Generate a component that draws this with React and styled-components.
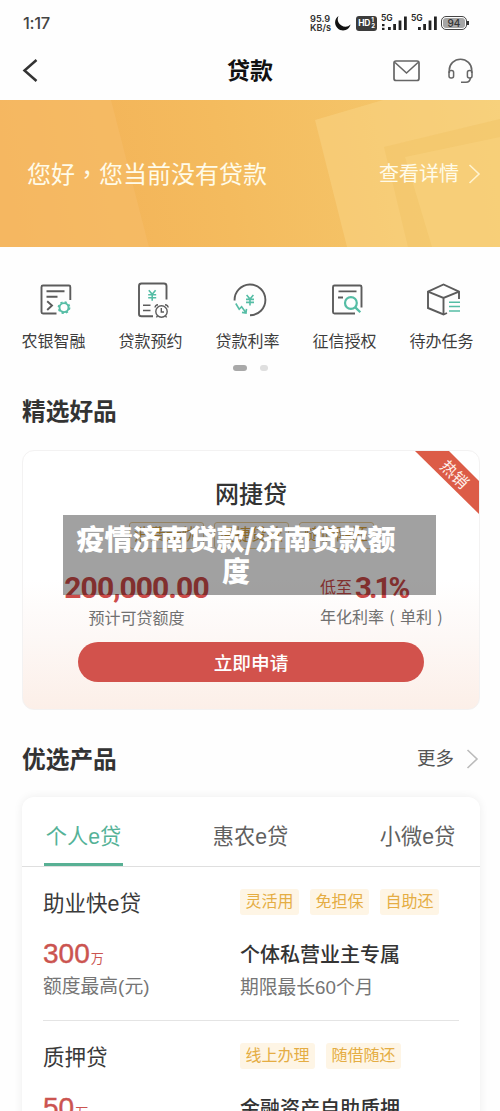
import styled, { createGlobalStyle } from 'styled-components';

const DARK = '#5c5c5c';
const TEAL = '#55bda5';

const tabs = ['个人e贷', '惠农e贷', '小微e贷'];

const products = [
	{
		name: '助业快e贷',
		amount: '300',
		tags: ['灵活用', '免担保', '自助还'],
		title: '个体私营业主专属',
		term: '期限最长60个月',
	},
	{
		name: '质押贷',
		amount: '50',
		tags: ['线上办理', '随借随还'],
		title: '金融资产自助质押',
	},
];

const Yen = ({ x, y }) => (
	<path
		transform={`translate(${x} ${y})`}
		d='M-3.4 -5 L0 -1 L3.4 -5 M0 -1 V5.5 M-4 -0.6 H4 M-4 2.4 H4'
		stroke={TEAL}
		strokeWidth='1.6'
	/>
);

const SmartIcon = () => (
	<QuickSvg viewBox='0 0 41 40'>
		<path d='M37.3 20 V7 Q37.3 5.5 36 5.5 H10 Q8.5 5.5 8.5 7 V32 Q8.5 33.5 10 33.5 H23.5' />
		<path d='M13.5 11.3 H31.5 M13.5 16.7 H24.5 M14.2 21.2 L19 25.5 L14.2 30' />
		<circle cx='31' cy='27.6' r='4.5' stroke={TEAL} />
		<circle
			cx='31'
			cy='27.6'
			r='5.6'
			stroke={TEAL}
			strokeWidth='1.6'
			strokeDasharray='2.2 2.2'
		/>
	</QuickSvg>
);

const BookingIcon = () => (
	<QuickSvg viewBox='0 0 41 40'>
		<path d='M36.5 19.5 V6 Q36.5 3.5 34 3.5 H11.5 Q9 3.5 9 6 V34 Q9 36.3 11.5 36.3 H23' />
		<path d='M13 25.3 H20.5 M13 30.5 H20.5' strokeWidth='1.4' />
		<Yen x={22.2} y={15.3} />
		<circle cx='31.5' cy='31.5' r='5.7' strokeWidth='1.4' />
		<path
			d='M31.3 28 V32 H34 M25 27.5 Q25.4 25 28 24.8 M35 24.8 Q37.8 25 38.2 27.5 M27.5 36 L26.4 37.4 M35.5 36 L36.6 37.4'
			strokeWidth='1.4'
		/>
	</QuickSvg>
);

const RateIcon = () => (
	<QuickSvg viewBox='0 0 41 40'>
		<path d='M7.6 20.5 A15.4 15.4 0 1 1 23 35.3' />
		<Yen x={23} y={20} />
		<path
			d='M8.8 23.5 L12.2 29.2 L14.6 26.8 L18.8 32.5 M19.5 28.8 L19 33 L15 32.4'
			stroke={TEAL}
			strokeWidth='1.6'
		/>
	</QuickSvg>
);

const CreditIcon = () => (
	<QuickSvg viewBox='0 0 41 40'>
		<path d='M37.5 27.5 V7 Q37.5 5.5 36 5.5 H10.5 Q9 5.5 9 7 V32 Q9 33.5 10.5 33.5 H31' />
		<path d='M14.5 11.4 H32.5 M14 17.5 H19' />
		<circle cx='26.9' cy='23' r='5.9' stroke={TEAL} strokeWidth='2.2' />
		<path d='M31.3 27.4 L36.3 32.3' stroke={TEAL} strokeWidth='2.3' />
	</QuickSvg>
);

const TaskIcon = () => (
	<QuickSvg viewBox='0 0 41 40'>
		<path d='M38 19 V11.6 L22.5 4.5 L7 11.6 V28 L22.5 34.5 L26 33' />
		<path d='M7 11.6 L22.5 18 L38 11.6 M22.5 18 V34' />
		<path d='M28 22.2 H39 M28 26.6 H39 M28 31 H39' stroke={TEAL} strokeWidth='1.5' />
	</QuickSvg>
);

const quickLinks = [
	{ label: '农银智融', Icon: SmartIcon },
	{ label: '贷款预约', Icon: BookingIcon },
	{ label: '贷款利率', Icon: RateIcon },
	{ label: '征信授权', Icon: CreditIcon },
	{ label: '待办任务', Icon: TaskIcon },
];

const Signal = ({ dots }) => (
	<SignalBox>
		<small>5G</small>
		<svg width='27' height='16' viewBox='0 0 27 16' fill='#222'>
			{dots && <rect x='1' y='8' width='2.5' height='2.2' />}
			{dots && <rect x='1' y='11.8' width='2.5' height='2.2' />}
			<rect x='7' y='11' width='2.8' height='3' />
			<rect x='12.2' y='8' width='2.8' height='6' />
			<rect x='17.6' y='4.5' width='2.8' height='9.5' />
			<rect x='23' y='0.5' width='2.8' height='13.5' />
		</svg>
	</SignalBox>
);

const StatusBar = () => (
	<StyledStatus>
		<Clock>1:17</Clock>
		<Speed>
			<span>95.9</span>
			<span>KB/s</span>
		</Speed>
		<Moon width='18' height='16' viewBox='0 0 18 16'>
			<path d='M4.5 1 A7.9 7.9 0 1 0 16.6 9.6 A7.6 7.6 0 0 1 4.5 1 Z' fill='#111' />
		</Moon>
		<HdBadge>
			HD
			<span>
				<i>1</i>
				<i>2</i>
			</span>
		</HdBadge>
		<Signal dots />
		<Signal />
		<Battery>
			<b>94</b>
		</Battery>
	</StyledStatus>
);

const Chevron = ({ color }) => (
	<svg width='13' height='20' viewBox='0 0 13 20' fill='none'>
		<path d='M1.5 1 L11 10 L1.5 19' stroke={color} strokeWidth='1.6' />
	</svg>
);

const App = () => {
	return (
		<>
			<GlobalStyle />
			<Page>
				<StatusBar />

				<NavBar>
					<svg width='20' height='26' viewBox='0 0 20 26' fill='none'>
						<path d='M14.5 2 L2.5 12.5 L14.5 23' stroke='#333' strokeWidth='2.5' />
					</svg>
					<h1>贷款</h1>
					<NavActions>
						<svg width='27' height='24' viewBox='0 0 27 24' fill='none' stroke='#666'>
							<rect x='1' y='2' width='25' height='19.5' rx='2' strokeWidth='1.7' />
							<path d='M2 3.5 L13.5 14 L25 3.5' strokeWidth='1.6' />
						</svg>
						<svg width='27' height='26' viewBox='0 0 27 26' fill='none' stroke='#666'>
							<path d='M2.3 15 V12 A11 10.6 0 0 1 24.7 12 V15' strokeWidth='1.6' />
							<rect x='2' y='12.5' width='4.6' height='7.6' rx='2' strokeWidth='1.5' />
							<rect x='20.4' y='12.5' width='4.6' height='7.6' rx='2' strokeWidth='1.5' />
							<path d='M23.5 19.5 Q23 24.3 19 24.3 H14' strokeWidth='1.6' />
						</svg>
					</NavActions>
				</NavBar>

				<Banner>
					<BannerArt viewBox='0 0 500 147' preserveAspectRatio='none'>
						<path d='M0 0 H111 L149 147 H0 Z' fill='#f6bd6c' opacity='.55' />
						<path d='M315 20 L383 0 H500 V147 H347 Z' fill='#fbd98c' opacity='.42' />
						<path d='M384 47 L500 19 V147 H408 Z' fill='#f2c366' opacity='.5' />
						<path d='M405 57 L500 37 V147 H432 Z' fill='#fad582' opacity='.45' />
					</BannerArt>
					<Greeting>
						您好<Tc>，</Tc>您当前没有贷款
					</Greeting>
					<Detail>
						查看详情
						<Chevron color='#fff3cf' />
					</Detail>
				</Banner>

				<QuickGrid>
					{quickLinks.map(({ label, Icon }) => (
						<QuickItem key={label}>
							<Icon />
							<span>{label}</span>
						</QuickItem>
					))}
				</QuickGrid>
				<Dots>
					<Dot $active />
					<Dot />
				</Dots>

				<SectionHead $top={22}>
					<h2>精选好品</h2>
				</SectionHead>
				<Featured>
					<Ribbon>
						<span>热销</span>
					</Ribbon>
					<h3>网捷贷</h3>
					<FeatureTags>
						<span>消费无忧</span>
						<span>便捷贷款</span>
						<span>随借随还</span>
					</FeatureTags>
					<Figures>
						<Figure>
							<strong>200,000.00</strong>
							<p>预计可贷额度</p>
						</Figure>
						<Rate>
							<div>
								<span>低至</span>
								<strong>3.1%</strong>
							</div>
							<p>
								年化利率<Paren>(</Paren>单利<Paren>)</Paren>
							</p>
						</Rate>
					</Figures>
					<Apply>立即申请</Apply>
					<Caption>疫情济南贷款/济南贷款额度</Caption>
				</Featured>

				<SectionHead $top={31}>
					<h2>优选产品</h2>
					<More>
						更多
						<Chevron color='#bbb' />
					</More>
				</SectionHead>
				<Panel>
					<Tabs>
						{tabs.map((tab, i) => (
							<Tab key={tab} $active={i === 0}>
								{tab}
							</Tab>
						))}
					</Tabs>
					{products.map((item) => (
						<Product key={item.name}>
							<div>
								<Name>{item.name}</Name>
								<Amount>
									{item.amount}
									<small>万</small>
								</Amount>
								{item.term && <Note>额度最高(元)</Note>}
							</div>
							<div>
								<Tags>
									{item.tags.map((tag) => (
										<Tag key={tag}>{tag}</Tag>
									))}
								</Tags>
								<Title>{item.title}</Title>
								{item.term && <Note>{item.term}</Note>}
							</div>
						</Product>
					))}
				</Panel>
			</Page>
		</>
	);
};

const GlobalStyle = createGlobalStyle`
	* {
		box-sizing: border-box;
		margin: 0;
		padding: 0;
	}

	body {
		background: #fefefe;
		color: #333;
		font-family: 'Liberation Sans', 'Noto Sans CJK SC', sans-serif;
	}

	svg {
		display: block;
		flex: none;
	}
`;

const Page = styled.div`
	width: 500px;
	height: 1111px;
	overflow: hidden;
	background: #fefefe;
`;

const Tc = styled.span`
	font-family: 'Noto Sans CJK TC', sans-serif;
`;

const Paren = styled.i`
	display: inline-block;
	width: 16px;
	font-family: 'Noto Sans CJK SC', sans-serif;
	font-style: normal;
	text-align: center;
`;

const StyledStatus = styled.header`
	display: flex;
	align-items: center;
	height: 46px;
	padding: 0 33px 0 23px;
`;

const Clock = styled.span`
	flex: 1;
	font: 500 16.5px/20px Inter, sans-serif;
	letter-spacing: -0.3px;
	color: #444;
`;

const Speed = styled.div`
	display: flex;
	flex-direction: column;
	width: 26px;
	margin-right: 1px;
	font: 600 9.2px/9px Inter, sans-serif;
	color: #333;
`;

const Moon = styled.svg`
	margin-left: -3px;
	margin-right: 3px;
`;

const HdBadge = styled.div`
	display: flex;
	align-items: center;
	justify-content: center;
	width: 21px;
	height: 15px;
	margin: 0 4px 0 1px;
	border-radius: 3px;
	background: #3c3c3c;
	color: #fff;
	font: 700 8.5px/15px Inter, sans-serif;
	letter-spacing: -0.3px;

	span {
		display: flex;
		flex-direction: column;
		margin-left: 1px;
	}

	i {
		font: 700 6px/6px Inter, sans-serif;
	}
`;

const SignalBox = styled.div`
	position: relative;
	width: 27px;
	margin-right: 3px;

	svg {
		margin-top: 1px;
	}

	small {
		position: absolute;
		top: -1px;
		left: 0;
		font: 600 8.5px/8px Inter, sans-serif;
		color: #222;
	}
`;

const Battery = styled.div`
	position: relative;
	width: 26px;
	height: 14px;
	padding: 1px;
	border: 1px solid #444;
	border-radius: 5px;

	b {
		display: block;
		height: 10px;
		border-radius: 3px;
		background: #a5a5a5;
		color: #333;
		text-align: center;
		font: 500 10px/10px Inter, sans-serif;
	}

	&::after {
		content: '';
		position: absolute;
		top: 4px;
		right: -3px;
		width: 2px;
		height: 4px;
		background: #333;
	}
`;

const NavBar = styled.nav`
	display: grid;
	grid-template-columns: 1fr auto 1fr;
	align-items: center;
	height: 54px;
	padding: 0 26px 5px 22px;

	h1 {
		padding-left: 4px;
		font-size: 23px;
		line-height: 34px;
		font-weight: 600;
		color: #111;
	}
`;

const NavActions = styled.div`
	display: flex;
	justify-content: flex-end;
	align-items: center;
	gap: 27px;
`;

const Banner = styled.section`
	position: relative;
	display: flex;
	align-items: center;
	justify-content: space-between;
	height: 147px;
	padding: 0 19px 0 27px;
	background: linear-gradient(80deg, #f3af55 0%, #f4bb5e 45%, #f5cb70 100%);
	color: #fffbe9;
`;

const BannerArt = styled.svg`
	position: absolute;
	inset: 0;
	width: 100%;
	height: 100%;
`;

const Greeting = styled.p`
	position: relative;
	font-size: 24px;
	line-height: 36px;
`;

const Detail = styled.div`
	position: relative;
	display: flex;
	align-items: center;
	gap: 9px;
	font-size: 20px;
	line-height: 30px;
`;

const QuickGrid = styled.div`
	display: grid;
	grid-template-columns: repeat(5, 97px);
	padding: 33px 0 0 5px;
`;

const QuickItem = styled.div`
	display: flex;
	flex-direction: column;
	align-items: center;
	gap: 10px;
	font-size: 16px;
	line-height: 24px;
	color: #3c3c3c;
`;

const QuickSvg = styled.svg.attrs({
	fill: 'none',
	stroke: DARK,
	strokeWidth: 1.9,
})`
	width: 41px;
	height: 40px;
`;

const Dots = styled.div`
	display: flex;
	justify-content: center;
	gap: 13px;
	margin-top: 11px;
	padding-left: 1px;
`;

const Dot = styled.i`
	width: ${(props) => (props.$active ? '14px' : '8px')};
	height: 6px;
	border-radius: 3px;
	background: ${(props) => (props.$active ? '#a9a9a9' : '#dfdfdf')};
`;

const SectionHead = styled.div`
	display: flex;
	align-items: center;
	justify-content: space-between;
	margin-top: ${(props) => props.$top}px;
	padding: 0 21px 0 22px;

	h2 {
		font-size: 23.7px;
		line-height: 38px;
		font-weight: 700;
		color: #333;
	}
`;

const More = styled.div`
	display: flex;
	align-items: center;
	gap: 12px;
	padding-bottom: 2px;
	font-size: 18.5px;
	line-height: 28px;
	color: #555;
`;

const Featured = styled.section`
	position: relative;
	display: flex;
	flex-direction: column;
	align-items: center;
	width: 458px;
	height: 260px;
	margin: 19px 0 0 22px;
	padding-top: 26px;
	border: 1px solid #f3f2f2;
	border-radius: 12px;
	background: linear-gradient(#fff 50%, #fdf8f6 72%, #fcefe8 100%);

	h3 {
		font-size: 24px;
		line-height: 36px;
		font-weight: 500;
		color: #333;
	}
`;

const Ribbon = styled.div`
	position: absolute;
	top: 0;
	right: 0;
	width: 64px;
	height: 63px;
	background: #dc5c47;
	clip-path: polygon(0 0, 34px 0, 100% 30px, 100% 100%);

	span {
		position: absolute;
		top: 12px;
		left: 22px;
		width: 34px;
		color: #fff0ea;
		font-size: 16px;
		line-height: 24px;
		text-align: center;
		transform: rotate(45deg);
	}
`;

const FeatureTags = styled.div`
	display: flex;
	gap: 10px;
	margin-top: 9px;

	span {
		width: 75px;
		height: 27px;
		border: 1px solid #edd09a;
		border-radius: 3px;
		color: #dba53d;
		font-size: 16px;
		line-height: 24px;
		text-align: center;
	}
`;

const Figures = styled.div`
	display: flex;
	justify-content: space-between;
	width: 100%;
	height: 63px;
	margin-top: 20px;
	padding: 0 31px 0 42px;

	strong {
		font-family: Roboto, sans-serif;
		font-weight: 700;
		color: #cc4b49;
		white-space: nowrap;
	}

	p {
		font-size: 16px;
		line-height: 24px;
		color: #707070;
		white-space: nowrap;
	}
`;

const Figure = styled.div`
	display: flex;
	flex-direction: column;
	align-items: center;
	width: 143px;

	strong {
		font-size: 30px;
		line-height: 38px;
		letter-spacing: -0.95px;
	}
`;

const Rate = styled.div`
	width: 128px;

	div {
		display: flex;
		align-items: center;
		gap: 3px;
		height: 35px;
	}

	span {
		padding-bottom: 2px;
		font-size: 16px;
		color: #cc4b49;
	}

	strong {
		padding-top: 3px;
		font-size: 29.5px;
		line-height: 36px;
		letter-spacing: -3px;
	}
`;

const Apply = styled.button`
	width: 346px;
	height: 40px;
	margin-top: 10px;
	border: 0;
	border-radius: 20px;
	background: #d2524c;
	color: #fff;
	font: 500 18.7px/38px 'Noto Sans CJK SC', sans-serif;
`;

const Caption = styled.div`
	position: absolute;
	top: 64px;
	left: 40px;
	width: 373px;
	height: 80px;
	padding: 7px 39px 0 12px;
	background: rgba(0, 0, 0, 0.37);
	color: #fff;
	font-family: 'Noto Sans CJK SC', sans-serif;
	font-size: 28px;
	line-height: 32px;
	font-weight: 900;
	text-align: center;
	word-break: break-all;
`;

const Panel = styled.section`
	width: 458px;
	height: 340px;
	margin: 18px 0 0 22px;
	border-radius: 12px;
	background: #fff;
	box-shadow: 0 0 10px rgba(0, 0, 0, 0.07);
`;

const Tabs = styled.div`
	display: flex;
	justify-content: space-between;
	height: 70px;
	padding: 0 23px 0 22px;
	border-bottom: 1px solid #dfdfdf;
`;

const Tab = styled.div`
	width: 79px;
	height: 69px;
	padding-top: 24px;
	border-bottom: 3px solid ${(props) => (props.$active ? '#58b094' : 'transparent')};
	color: ${(props) => (props.$active ? '#55b297' : '#606060')};
	font-size: 21.2px;
	line-height: 32px;
	text-align: center;
	white-space: nowrap;
`;

const Product = styled.article`
	display: grid;
	grid-template-columns: 197px 1fr;
	height: 154px;
	margin: 0 21px;
	padding-top: 20px;
	border-bottom: 1px solid #e4e4e4;
`;

const Name = styled.h4`
	padding-top: 1px;
	font-size: 21.5px;
	line-height: 32px;
	font-weight: 400;
	color: #3a3a3a;
`;

const Amount = styled.p`
	display: flex;
	align-items: baseline;
	height: 34px;
	margin-top: 17px;
	font-size: 28px;
	line-height: 34px;
	color: #cb5450;
	-webkit-text-stroke: 0.4px #cb5450;

	small {
		margin-left: 1px;
		font-size: 13px;
		line-height: 1;
		-webkit-text-stroke: 0;
	}
`;

const Note = styled.p`
	font-size: 18.8px;
	line-height: 32px;
	color: #757575;
`;

const Tags = styled.div`
	display: flex;
	gap: 11px;
	padding-top: 2px;
`;

const Tag = styled.span`
	height: 26px;
	padding: 0 5.5px;
	border-radius: 3px;
	background: #fef5e5;
	color: #e5ad43;
	font-size: 16px;
	line-height: 26px;
`;

const Title = styled.h4`
	margin-top: 23px;
	font-size: 20px;
	line-height: 34px;
	font-weight: 500;
	color: #333;
`;

export default App;
